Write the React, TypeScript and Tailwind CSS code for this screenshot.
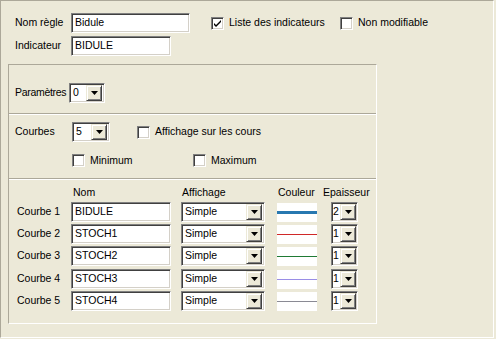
import React from "react"

const sunken =
  "border border-t-[#808080] border-l-[#808080] border-b-white border-r-white shadow-[inset_1px_1px_0_#404040,inset_-1px_-1px_0_#d4d0c8]"

function Input({ value, w }: { value: string; w: string }) {
  return (
    <div className={`${sunken} ${w} h-[20px] bg-white flex items-center pl-[3px] pb-[1px] overflow-hidden whitespace-nowrap`}>
      {value}
    </div>
  )
}

function Arrow() {
  return (
    <div className="w-[16px] h-[16px] bg-[#ece9d8] border border-t-[#ece9d8] border-l-[#ece9d8] border-b-[#404040] border-r-[#404040] shadow-[inset_1px_1px_0_#ffffff,inset_-1px_-1px_0_#808080] flex items-center justify-center shrink-0">
      <svg width="7" height="4" viewBox="0 0 7 4">
        <path d="M0 0h7L3.5 4z" fill="#000" />
      </svg>
    </div>
  )
}

function Select({ value, w, small }: { value: string; w: string; small?: boolean }) {
  return (
    <div className={`${sunken} ${w} h-[20px] bg-white flex items-center ${small ? "pl-[1px] pr-[1px]" : "pl-[2px] pr-[2px]"}`}>
      <div className={`flex-1 whitespace-nowrap ${small ? "" : "pl-[1px]"}`}>{value}</div>
      <Arrow />
    </div>
  )
}

function Check({ checked, label }: { checked?: boolean; label: string }) {
  return (
    <div className="flex items-center gap-[5px]">
      <div className={`${sunken} w-[13px] h-[13px] bg-white flex items-center justify-center shrink-0`}>
        {checked && (
          <svg width="7" height="7" viewBox="0 0 7 7">
            <path d="M0 2v2l2 2 5-5V-1L2 4z" fill="#000" transform="translate(0 1)" />
          </svg>
        )}
      </div>
      <span className="whitespace-nowrap">{label}</span>
    </div>
  )
}

function Separator() {
  return <div className="h-[2px] border-t border-t-[#aca899] border-b border-b-white" />
}

const courbes = [
  { name: "BIDULE", color: "bg-[#2878b0]", h: "h-[3px]", ep: "2", mt: "mt-0" },
  { name: "STOCH1", color: "bg-[#d02828]", h: "h-[1px]", ep: "1", mt: "mt-[2px]" },
  { name: "STOCH2", color: "bg-[#1f7a34]", h: "h-[1px]", ep: "1", mt: "mt-[2px]" },
  { name: "STOCH3", color: "bg-[#9a8ee6]", h: "h-[1px]", ep: "1", mt: "mt-[3px]" },
  { name: "STOCH4", color: "bg-[#8a8a94]", h: "h-[1px]", ep: "1", mt: "mt-[2px]" },
]

export default function App() {
  return (
    <div className="w-[496px] h-[339px] bg-[#ece9d8] text-black text-[10.5px] font-['Liberation_Sans',Arial,sans-serif] overflow-hidden">
      <div className="w-[494px] h-[338px] border border-t-[#aca899] border-l-[#aca899] border-b-white border-r-white">
        <div className="pl-[14px] pt-[12px]">
          <div className="flex items-center h-[20px]">
            <span className="w-[56px]">Nom règle</span>
            <Input value="Bidule" w="w-[119px]" />
            <div className="ml-[21px] w-[129px]">
              <Check checked label="Liste des indicateurs" />
            </div>
            <Check label="Non modifiable" />
          </div>
          <div className="flex items-center h-[20px] mt-[3px]">
            <span className="w-[56px]">Indicateur</span>
            <Input value="BIDULE" w="w-[100px]" />
          </div>
        </div>

        <div className="ml-[7px] mt-[8px] w-[369px] h-[260px] border border-t-[#aca899] border-l-[#aca899] border-b-white border-r-white">
          <div className="pl-[6px] pt-[18px] flex items-center h-[38px]">
            <span className="w-[54px] shrink-0 whitespace-nowrap tracking-[-0.3px]">Paramètres</span>
            <Select value="0" w="w-[36px]" />
          </div>
          <div className="mt-[10px]">
            <Separator />
          </div>

          <div className="pl-[6px] mt-[7px] flex items-center h-[20px]">
            <span className="w-[57px]">Courbes</span>
            <Select value="5" w="w-[38px]" />
            <div className="ml-[27px]">
              <Check label="Affichage sur les cours" />
            </div>
          </div>
          <div className="pl-[63px] mt-[12px] flex items-center h-[13px]">
            <div className="w-[121px]">
              <Check label="Minimum" />
            </div>
            <Check label="Maximum" />
          </div>
          <div className="mt-[11px]">
            <Separator />
          </div>

          <div className="flex items-end h-[17px] pl-[64px] leading-none">
            <span className="w-[109px]">Nom</span>
            <span className="w-[96px]">Affichage</span>
            <span className="w-[45px]">Couleur</span>
            <span>Epaisseur</span>
          </div>

          <div className="flex flex-col mt-[5px]">
            {courbes.map((c, i) => (
              <div key={i} className={`flex items-center h-[20px] pl-[8px] ${c.mt}`}>
                <span className="w-[54px]">Courbe {i + 1}</span>
                <Input value={c.name} w="w-[100px]" />
                <div className="ml-[10px]">
                  <Select value="Simple" w="w-[84px]" />
                </div>
                <div className="ml-[12px] w-[40px] h-[19px] bg-white flex items-center">
                  <div className={`w-full ${c.h} ${c.color}`} />
                </div>
                <div className="ml-[14px]">
                  <Select value={c.ep} w="w-[27px]" small />
                </div>
              </div>
            ))}
          </div>
        </div>
      </div>
    </div>
  )
}
